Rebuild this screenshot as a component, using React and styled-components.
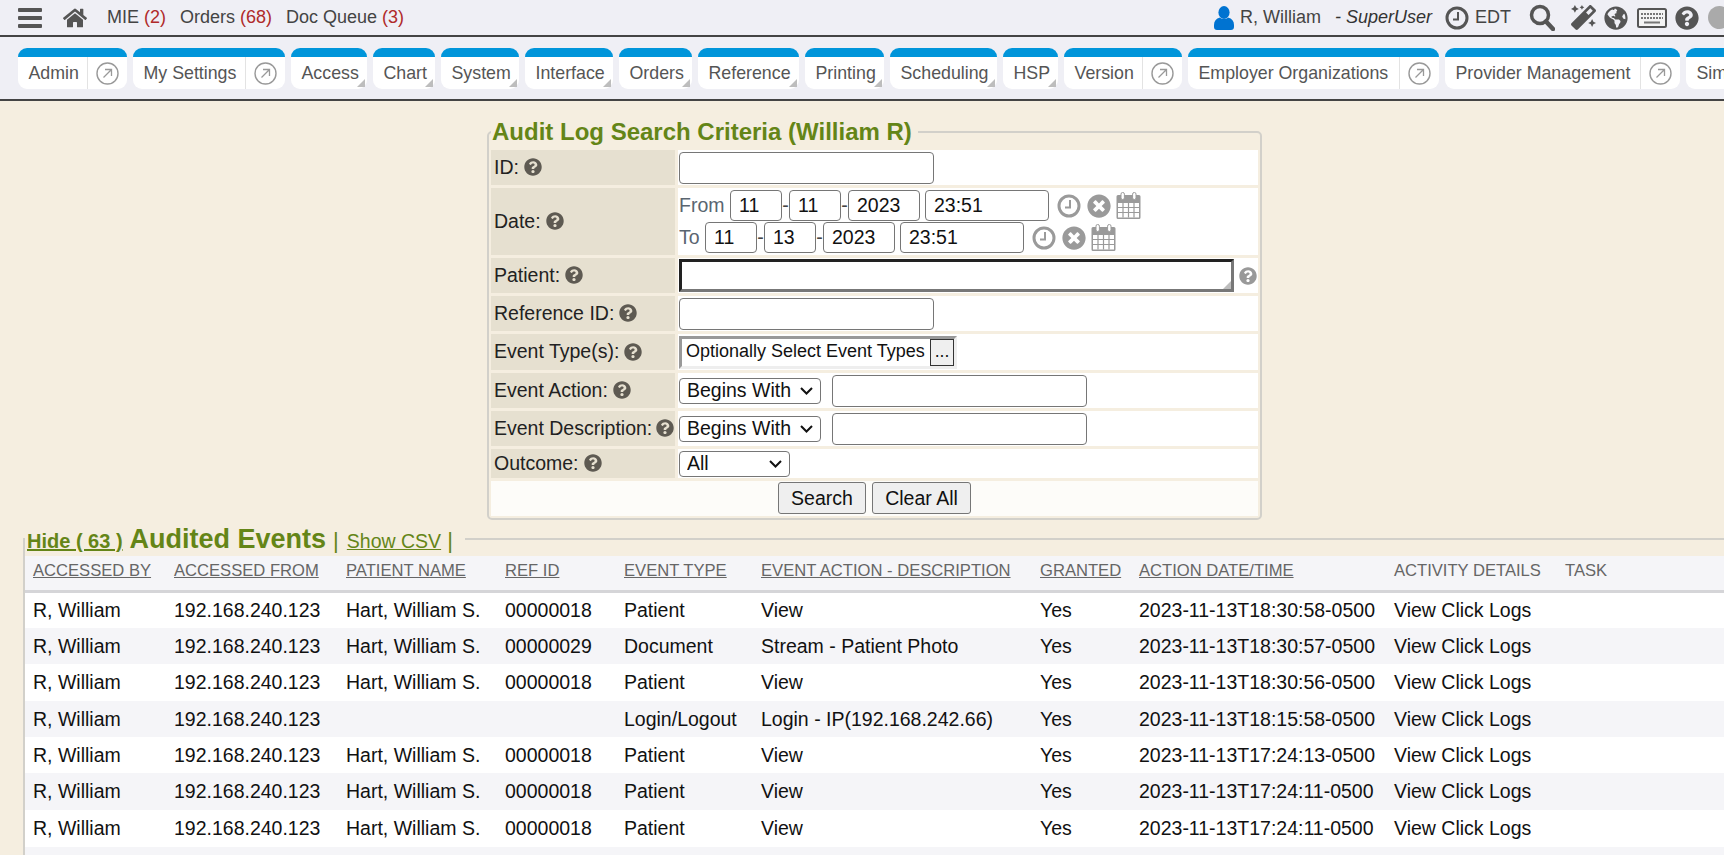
import React from "react";
import styled, { createGlobalStyle } from "styled-components";
import { FaHome, FaQuestionCircle, FaTimesCircle, FaMagic, FaGlobeAmericas } from "react-icons/fa";

const Global = createGlobalStyle`
  html, body { margin: 0; padding: 0; height: 100%; overflow: hidden; background: #f5eee0; }
  body { font-family: "Liberation Sans", Arial, sans-serif; color: #111; }
  * { box-sizing: border-box; }
`;

const Page = styled.div`
  width: 1724px; height: 855px; overflow: hidden; display: flex; flex-direction: column;
`;

/* top bar */
const TopBar = styled.header`
  height: 37px; flex: none; display: flex; align-items: center; background: #efeff5;
  border-bottom: 2px solid #444; padding: 0 0 0 18px; font-size: 18px; color: #444;
`;
const TopLeft = styled.div`display: flex; align-items: center;`;
const TopRight = styled.div`margin-left: auto; display: flex; align-items: center;`;
const Count = styled.span`color: #b02a2a;`;
const TopLink = styled.span`margin-left: ${p => p.$ml}px; white-space: nowrap;`;
const Role = styled.em`margin-left: ${p => p.$ml}px; white-space: nowrap; color: #333;`;
const IconSlot = styled.span`
  display: inline-flex; margin-left: ${p => p.$ml || 0}px; color: ${p => p.$color || "#555"};
`;
const GrayDot = styled.span`
  flex: none; width: 23px; height: 23px; border-radius: 50%; background: #aaa; margin: 0 -7px 0 9px;
`;

/* nav tabs */
const Nav = styled.nav`
  height: 64px; flex: none; display: flex; gap: 6px; padding: 11px 0 0 18px; background: #efeff5;
  border-bottom: 2px solid #444; overflow: hidden;
`;
const Tab = styled.div`
  position: relative; flex: none; width: ${p => p.$w}px; height: 41px; display: flex;
  background: #fff; border-top: 9px solid #0095da; border-radius: 9px; color: #555;
  font-size: 17.8px; line-height: 32px; white-space: nowrap;
`;
const TabLabel = styled.span`flex: 1; padding-left: 10.5px;`;
const TabLink = styled.span`
  flex: none; width: 40px; border-left: 1px solid #e3e3e3; display: flex; align-items: center;
  justify-content: center;
`;
const Corner = styled.i`
  position: absolute; right: ${p => p.$r ?? 2}px; bottom: ${p => p.$r ?? 2}px; width: 0; height: 0;
  border-left: 8px solid transparent; border-bottom: 8px solid #bdbdbd;
`;

/* search form */
const Main = styled.main`flex: 1; min-height: 0;`;
const SearchSet = styled.fieldset`
  width: 775px; margin: 18px 0 0 487px; padding: 5px 4px 2px 2px; min-width: 0;
  border: 2px solid #d2d0ca; border-radius: 5px;
`;
const SearchLegend = styled.legend`
  padding: 0 6px 0 1px; font-size: 24px; line-height: 26px; font-weight: bold; color: #648517;
`;
const FormGrid = styled.div`
  display: grid; grid-template-columns: 184px 580px; gap: 3px;
  grid-template-rows: 35px 67px 35px 35px 36px 35px 35px 29px 35px;
`;
const Label = styled.div`
  background: #e6e0d0; display: flex; align-items: center; padding: 0 0 1px 3px;
  font-size: 19.5px; white-space: nowrap; color: #222;
`;
const Value = styled.div`
  background: #fff; display: flex; align-items: center; padding-left: 1px; font-size: 19.5px;
`;
const HelpIcon = styled(FaQuestionCircle)`
  flex: none; width: 18px; height: 18px; margin-left: ${p => p.$ml ?? 5}px; color: #5e5a52;
`;
const PatientHelp = styled(FaQuestionCircle)`
  flex: none; width: 18px; height: 18px; margin-left: 5px; color: #999;
`;
const TextInput = styled.input`
  width: ${p => p.$w}px; height: ${p => p.$h || 32}px; flex: none; margin: 0; padding: 0 8px;
  margin-left: ${p => p.$ml || 0}px; border: 1px solid #767676; border-radius: 4px;
  background: #fff; font: 19.5px "Liberation Sans", Arial, sans-serif; color: #111;
`;
const DateStack = styled.div`display: flex; flex-direction: column; gap: 1px;`;
const DateLine = styled.div`display: flex; align-items: center; height: 31px; color: #5a6570;`;
const DateWord = styled.span`width: ${p => p.$w}px; flex: none;`;
const Dash = styled.span`width: 7px; flex: none; text-align: center; color: #444;`;
const DateIcon = styled.span`display: inline-flex; flex: none; margin-left: ${p => p.$ml}px; color: #9a9a9a;`;
const PatientWrap = styled.div`position: relative; flex: none; width: 555px; height: 33px;`;
const PatientBox = styled.textarea`
  display: block; width: 100%; height: 100%; margin: 0; padding: 0;
  border: 3px solid; border-color: #222 #777 #777 #222; background: #fff; resize: none; outline: 0;
`;
const EventBox = styled.div`
  width: 278px; height: 33px; flex: none; display: flex; align-items: center; justify-content: space-between;
  padding: 0 0 0 4px; border: 3px solid; border-color: #999 #eee #eee #999; background: #fff;
  font-size: 18px; white-space: nowrap;
`;
const EventText = styled.span`margin-bottom: 2px;`;
const DotsButton = styled.button`
  width: 24px; height: 27px; padding: 0 0 2px; border: 1px solid #333; background: #efefef; color: #111;
  font: 17.6px "Liberation Sans", Arial, sans-serif;
`;
const chevron = `url("data:image/svg+xml,%3Csvg xmlns='http://www.w3.org/2000/svg' width='13' height='8' viewBox='0 0 13 8'%3E%3Cpath d='M1 1 L6.5 6.5 L12 1' fill='none' stroke='%23111' stroke-width='2'/%3E%3C/svg%3E")`;
const Select = styled.select`
  width: ${p => p.$w}px; height: 26px; flex: none; margin: 0; padding: 0 0 2px 7px; border: 1px solid #767676;
  border-radius: 4px; color: #111; font: 19.5px "Liberation Sans", Arial, sans-serif;
  appearance: none; background: #fff ${chevron} no-repeat right 7px center;
`;
const ButtonRow = styled.div`
  grid-column: 1 / -1; background: #fdfcf9; display: flex; justify-content: center; gap: 6px;
  padding: 1px 0 0 0; align-items: flex-start;
`;
const ActionButton = styled.button`
  width: ${p => p.$w}px; height: 32px; padding: 0; border: 1px solid #767676; border-radius: 3px;
  background: #efefef; color: #111; font: 19.5px "Liberation Sans", Arial, sans-serif;
`;

/* audited events */
const EventsSet = styled.fieldset`
  width: 1720px; margin: 2px 0 0 23px; padding: 0; min-width: 0;
  border: 0; border-top: 2px solid #d2d0ca; border-left: 2px solid #d2d0ca;
`;
const EventsLegend = styled.legend`
  padding: 2px 12px 0 2px; margin: 0; line-height: 30px; color: #648517; white-space: nowrap; font-size: 19.5px;
`;
const HideLink = styled.a`font-size: 20px; font-weight: bold; text-decoration: underline; color: #648517;`;
const EventsTitle = styled.strong`font-size: 27px; margin-left: 7px;`;
const Pipe = styled.span`font-size: 22px; color: #648517; margin: 0 ${p => p.$mr || 0}px 0 ${p => p.$ml || 0}px;`;
const CsvLink = styled.a`text-decoration: underline; color: #648517;`;
const Table = styled.table`
  width: 1700px; table-layout: fixed; border-collapse: collapse; font-size: 19.5px;
`;
const HeadCell = styled.th`
  height: 35px; padding: 0 0 3px 8px; background: #f5f5f8; border-bottom: 3px solid #d5d5d8; text-align: left;
  font-weight: normal; font-size: 16.6px; color: #666; white-space: nowrap;
  text-decoration: ${p => (p.$plain ? "none" : "underline")};
`;
const Row = styled.tr`
  height: ${p => p.$h}px; background: ${p => (p.$odd ? "#f5f5f8" : "#fff")};
`;
const Cell = styled.td`padding: 0 0 0 8px; white-space: nowrap; color: #111;`;

const Bars = () => (
  <svg width="24" height="20" viewBox="0 0 24 20" fill="#555">
    <rect y="0" width="24" height="4" rx="1" /><rect y="8" width="24" height="4" rx="1" /><rect y="16" width="24" height="4" rx="1" />
  </svg>
);
const User = () => (
  <svg width="20" height="24" viewBox="0 0 20 24" fill="#0073d1">
    <ellipse cx="10" cy="6.5" rx="5.6" ry="6.5" />
    <path d="M6 11.5 C2 12.5 0 15 0 19 L0 21 C0 23 1.2 24 3 24 L17 24 C18.8 24 20 23 20 21 L20 19 C20 15 18 12.5 14 11.5 C12 13.5 8 13.5 6 11.5Z" />
  </svg>
);
const Clock = ({ size = 24, color = "#555" }) => (
  <svg width={size} height={size} viewBox="0 0 24 24" fill="none" stroke={color}>
    <circle cx="12" cy="12" r="10" strokeWidth="3" />
    <path d="M13 6 V13.5 H8" strokeWidth="2" />
  </svg>
);
const Search = () => (
  <svg width="26" height="27" viewBox="0 0 26 27" fill="none" stroke="#555">
    <circle cx="11" cy="11" r="8.5" strokeWidth="3.5" />
    <path d="M17 17.5 L24 25" strokeWidth="4.5" strokeLinecap="round" />
  </svg>
);
const Keyboard = () => (
  <svg width="30" height="20" viewBox="0 0 30 20">
    <rect x="1" y="1" width="28" height="18" rx="1.5" fill="#f4f4f4" stroke="#555" strokeWidth="2" />
    <path d="M4 6 H26 M4 10 H26" stroke="#777" strokeWidth="2" strokeDasharray="2 1" />
    <path d="M7 14.5 H23" stroke="#777" strokeWidth="2" />
  </svg>
);
const Calendar = () => (
  <svg width="25" height="27" viewBox="0 0 25 27">
    <path d="M2 3 H23 a1.5 1.5 0 0 1 1.5 1.5 V25.5 a1.5 1.5 0 0 1 -1.5 1.5 H2 a1.5 1.5 0 0 1 -1.5 -1.5 V4.5 A1.5 1.5 0 0 1 2 3Z" fill="#9a9a9a" />
    <rect x="5" y="0.5" width="3.4" height="7" rx="1.6" fill="#fff" stroke="#9a9a9a" />
    <rect x="16.6" y="0.5" width="3.4" height="7" rx="1.6" fill="#fff" stroke="#9a9a9a" />
    <path d="M2 11 H23 V25.5 H2Z" fill="#fff" />
    <path d="M2 15.5 H23 M2 20.5 H23 M7 11 V25.5 M12.5 11 V25.5 M18 11 V25.5" stroke="#9a9a9a" strokeWidth="1.2" />
  </svg>
);
const External = () => (
  <svg width="23" height="23" viewBox="0 0 23 23" fill="none" stroke="#999">
    <circle cx="11.5" cy="11.5" r="10.5" strokeWidth="1.4" />
    <path d="M7.5 15.5 L15 8 M9 7.5 H15.5 V14" strokeWidth="1.3" />
  </svg>
);

const TABS = [
  ["Admin", 109, "link"], ["My Settings", 152, "link"], ["Access", 76, "menu"], ["Chart", 62, "menu"],
  ["System", 78, "menu"], ["Interface", 88, "menu"], ["Orders", 73, "menu"], ["Reference", 101, "menu"],
  ["Printing", 79, "menu"], ["Scheduling", 107, "menu"], ["HSP", 55, "menu"], ["Version", 118, "link"],
  ["Employer Organizations", 251, "link"], ["Provider Management", 235, "link"], ["Sim", 80, "plain"],
];

const P = "Hart, William S.";
const ROWS = [
  [P, "00000018", "Patient", "View", "2023-11-13T18:30:58-0500", 37],
  [P, "00000029", "Document", "Stream - Patient Photo", "2023-11-13T18:30:57-0500", 36],
  [P, "00000018", "Patient", "View", "2023-11-13T18:30:56-0500", 37],
  ["", "", "Login/Logout", "Login - IP(192.168.242.66)", "2023-11-13T18:15:58-0500", 36],
  [P, "00000018", "Patient", "View", "2023-11-13T17:24:13-0500", 36],
  [P, "00000018", "Patient", "View", "2023-11-13T17:24:11-0500", 37],
  [P, "00000018", "Patient", "View", "2023-11-13T17:24:11-0500", 37],
];
const COLS = [141, 172, 159, 119, 137, 279, 99, 255, 171, 168];
const HEADS = [
  ["ACCESSED BY"], ["ACCESSED FROM"], ["PATIENT NAME"], ["REF ID"], ["EVENT TYPE"],
  ["EVENT ACTION - DESCRIPTION"], ["GRANTED"], ["ACTION DATE/TIME"], ["ACTIVITY DETAILS", true], ["TASK", true],
];

const DateIcons = () => (
  <>
    <DateIcon $ml={8}><Clock size={24} color="#9a9a9a" /></DateIcon>
    <DateIcon $ml={6}><FaTimesCircle size={24} /></DateIcon>
    <DateIcon $ml={5}><Calendar /></DateIcon>
  </>
);

export default function App() {
  return (
    <Page>
      <Global />
      <TopBar>
        <TopLeft>
          <IconSlot><Bars /></IconSlot>
          <IconSlot $ml={21}><FaHome size={24} /></IconSlot>
          <TopLink $ml={20}>MIE <Count>(2)</Count></TopLink>
          <TopLink $ml={14}>Orders <Count>(68)</Count></TopLink>
          <TopLink $ml={14}>Doc Queue <Count>(3)</Count></TopLink>
        </TopLeft>
        <TopRight>
          <IconSlot><User /></IconSlot>
          <TopLink $ml={6}>R, William</TopLink>
          <Role $ml={14}>- SuperUser</Role>
          <IconSlot $ml={13}><Clock /></IconSlot>
          <TopLink $ml={6}>EDT</TopLink>
          <IconSlot $ml={18}><Search /></IconSlot>
          <IconSlot $ml={16}><FaMagic size={25} /></IconSlot>
          <IconSlot $ml={8}><FaGlobeAmericas size={24} /></IconSlot>
          <IconSlot $ml={9}><Keyboard /></IconSlot>
          <IconSlot $ml={8}><FaQuestionCircle size={24} /></IconSlot>
          <GrayDot />
        </TopRight>
      </TopBar>
      <Nav>
        {TABS.map(([name, w, kind]) => (
          <Tab key={name} $w={w}>
            <TabLabel>{name}</TabLabel>
            {kind === "link" && <TabLink><External /></TabLink>}
            {kind === "menu" && <Corner />}
          </Tab>
        ))}
      </Nav>
      <Main>
        <SearchSet>
          <SearchLegend>Audit Log Search Criteria (William R)</SearchLegend>
          <FormGrid>
            <Label>ID:<HelpIcon /></Label>
            <Value><TextInput $w={255} /></Value>
            <Label>Date:<HelpIcon /></Label>
            <Value>
              <DateStack>
                <DateLine>
                  <DateWord $w={51}>From</DateWord>
                  <TextInput $w={52} $h={31} defaultValue="11" /><Dash>-</Dash>
                  <TextInput $w={52} $h={31} defaultValue="11" /><Dash>-</Dash>
                  <TextInput $w={72} $h={31} defaultValue="2023" />
                  <TextInput $w={124} $h={31} $ml={5} defaultValue="23:51" />
                  <DateIcons />
                </DateLine>
                <DateLine>
                  <DateWord $w={26}>To</DateWord>
                  <TextInput $w={52} $h={31} defaultValue="11" /><Dash>-</Dash>
                  <TextInput $w={52} $h={31} defaultValue="13" /><Dash>-</Dash>
                  <TextInput $w={72} $h={31} defaultValue="2023" />
                  <TextInput $w={124} $h={31} $ml={5} defaultValue="23:51" />
                  <DateIcons />
                </DateLine>
              </DateStack>
            </Value>
            <Label>Patient:<HelpIcon /></Label>
            <Value>
              <PatientWrap><PatientBox /><Corner $r={3} /></PatientWrap>
              <PatientHelp />
            </Value>
            <Label>Reference ID:<HelpIcon /></Label>
            <Value><TextInput $w={255} /></Value>
            <Label>Event Type(s):<HelpIcon /></Label>
            <Value>
              <EventBox><EventText>Optionally Select Event Types</EventText><DotsButton>...</DotsButton></EventBox>
            </Value>
            <Label>Event Action:<HelpIcon /></Label>
            <Value>
              <Select $w={142}><option>Begins With</option></Select>
              <TextInput $w={255} $ml={11} />
            </Value>
            <Label>Event Description:<HelpIcon $ml={4} /></Label>
            <Value>
              <Select $w={142}><option>Begins With</option></Select>
              <TextInput $w={255} $ml={11} />
            </Value>
            <Label>Outcome:<HelpIcon /></Label>
            <Value><Select $w={111}><option>All</option></Select></Value>
            <ButtonRow>
              <ActionButton $w={88}>Search</ActionButton>
              <ActionButton $w={99}>Clear All</ActionButton>
            </ButtonRow>
          </FormGrid>
        </SearchSet>
        <EventsSet>
          <EventsLegend>
            <HideLink>Hide ( 63 )</HideLink>
            <EventsTitle>Audited Events</EventsTitle>
            <Pipe $ml={7} $mr={8}>|</Pipe>
            <CsvLink>Show CSV</CsvLink>
            <Pipe $ml={6}>|</Pipe>
          </EventsLegend>
          <Table>
            <colgroup>{COLS.map((w, i) => <col key={i} style={{ width: w }} />)}</colgroup>
            <thead>
              <tr>{HEADS.map(([h, plain]) => <HeadCell key={h} $plain={plain}>{h}</HeadCell>)}</tr>
            </thead>
            <tbody>
              {ROWS.map((r, i) => (
                <Row key={i} $odd={i % 2 === 1} $h={r[5]}>
                  <Cell>R, William</Cell>
                  <Cell>192.168.240.123</Cell>
                  <Cell>{r[0]}</Cell>
                  <Cell>{r[1]}</Cell>
                  <Cell>{r[2]}</Cell>
                  <Cell>{r[3]}</Cell>
                  <Cell>Yes</Cell>
                  <Cell>{r[4]}</Cell>
                  <Cell>View Click Logs</Cell>
                  <Cell />
                </Row>
              ))}
              <Row $odd $h={36}><Cell colSpan={10} /></Row>
            </tbody>
          </Table>
        </EventsSet>
      </Main>
    </Page>
  );
}
